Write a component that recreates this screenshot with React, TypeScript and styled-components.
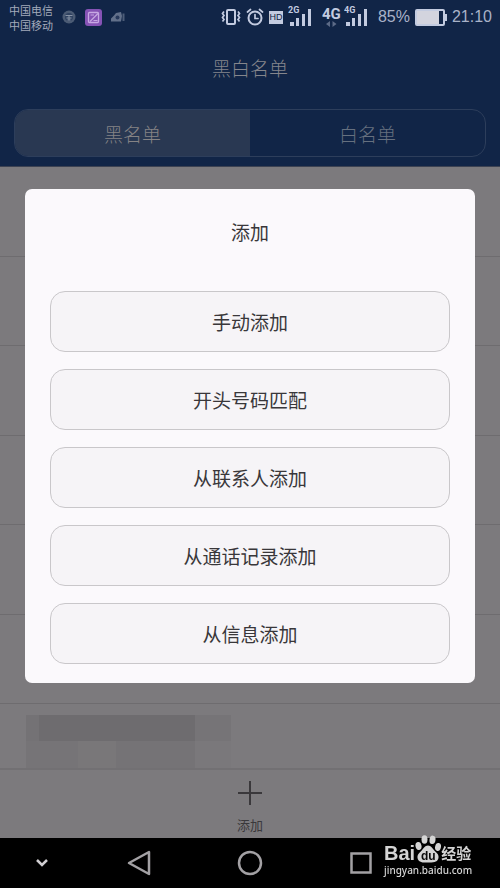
import React from "react";
import styled, { createGlobalStyle } from "styled-components";

const GlobalStyle = createGlobalStyle`
  * { box-sizing: border-box; }
  body {
    margin: 0;
    background: #7c7a7d;
    font-family: "Liberation Sans", "Noto Sans CJK SC", sans-serif;
  }
  button { font: inherit; color: inherit; margin: 0; padding: 0; border: 0; background: none; }
  svg { display: block; }
`;

const Screen = styled.div`
  display: flex;
  flex-direction: column;
  height: 100vh;
  overflow: hidden;
  background: #7c7a7d;
`;

const Header = styled.header`
  flex: none;
  background: #112547;
  border-bottom: 1px solid #3c4252;
`;

const StatusBar = styled.div`
  display: flex;
  align-items: center;
  justify-content: space-between;
  height: 34px;
  padding: 0 8px 0 9px;
  color: #c3cbe0;
`;

const StatusGroup = styled.div<{ $gap: number }>`
  display: flex;
  align-items: center;
  gap: ${(p) => p.$gap}px;
`;

const Carriers = styled.div`
  padding-top: 3px;
  font-size: 11px;
  line-height: 15px;
  color: #a3aabb;
`;

const StatusText = styled.span`
  font-family: "Liberation Sans", sans-serif;
  font-size: 16px;
  line-height: 20px;
  color: #a9b2c8;
`;

const Title = styled.h1`
  margin: 0;
  height: 75px;
  padding-top: 24px;
  font-size: 19px;
  line-height: 24px;
  font-weight: 300;
  text-align: center;
  color: #85868c;
`;

const Tabs = styled.div`
  display: grid;
  grid-template-columns: 1fr 1fr;
  height: 48px;
  margin: 0 14px 9px;
  border: 1px solid #2d3e5b;
  border-radius: 14px;
  overflow: hidden;
`;

const Tab = styled.button<{ $active?: boolean }>`
  background: ${(p) => (p.$active ? "#293852" : "transparent")};
  color: ${(p) => (p.$active ? "#858385" : "#66707f")};
  font-size: 19px;
  line-height: 24px;
  font-weight: 300;
  padding-top: 5px;
`;

const List = styled.ul`
  flex: 1;
  min-height: 0;
  margin: 0;
  padding: 0;
  list-style: none;
  overflow: hidden;
`;

const Row = styled.li`
  height: 90px;
  border-bottom: 1px solid #6e6c6f;
  &:nth-child(even) { height: 89px; }
`;

const Masked = styled.div`
  display: grid;
  grid-template-columns: 13px 39px 38px 79px 36px;
  grid-template-rows: 26px 29px;
  margin: 11px 0 0 26px;
`;

const Patch = styled.span<{ $tone: string }>`
  background: ${(p) => p.$tone};
`;

const BottomBar = styled.div`
  flex: none;
  display: flex;
  justify-content: center;
  height: 70px;
  border-top: 2px solid #727073;
`;

const AddButton = styled.button`
  display: flex;
  flex-direction: column;
  align-items: center;
  gap: 12px;
  width: 80px;
  padding-top: 11px;
  color: #3a383b;
  font-size: 13px;
  line-height: 18px;
`;

const NavBar = styled.nav`
  flex: none;
  display: grid;
  grid-template-columns: 83fr 111fr 111fr 111fr 84fr;
  height: 50px;
  background: #000;
  color: #a3a1a4;
`;

const NavButton = styled.button`
  display: grid;
  place-items: center;
`;

const Overlay = styled.div`
  position: fixed;
  inset: 34px 0 50px;
  display: flex;
  align-items: center;
  padding: 0 25px;
`;

const Dialog = styled.section`
  width: 100%;
  padding: 31px 25px 19px;
  border-radius: 7px;
  background: #fbf9fc;
`;

const DialogTitle = styled.h2`
  margin: 0 0 43px;
  font-size: 19px;
  line-height: 28px;
  font-weight: 400;
  text-align: center;
  color: #39373a;
`;

const Options = styled.div`
  display: grid;
  gap: 17px;
`;

const Option = styled.button`
  height: 61px;
  padding-top: 4px;
  border: 1px solid #c9c7ca;
  border-radius: 15px;
  background: #f6f4f7;
  color: #39373a;
  font-size: 19px;
  line-height: 28px;
`;

const Watermark = styled.a`
  position: fixed;
  right: 26px;
  bottom: 11px;
  width: 90px;
  color: #d4d4d4;
  text-decoration: none;
`;

const Brand = styled.span`
  display: flex;
  align-items: flex-end;
  height: 28px;
`;

const BrandText = styled.span`
  font-family: "Liberation Sans", sans-serif;
  font-weight: 700;
  font-size: 20px;
  line-height: 20px;
`;

const BrandSuffix = styled.span`
  font-family: "Noto Sans CJK SC", sans-serif;
  font-weight: 700;
  font-size: 15px;
  line-height: 20px;
`;

const Site = styled.span`
  display: block;
  font-family: "Noto Sans", sans-serif;
  font-size: 10px;
  font-weight: 500;
  line-height: 14px;
  white-space: nowrap;
`;

const RobotIcon = () => (
  <svg width="14" height="14" viewBox="0 0 14 14">
    <circle cx="7" cy="7" r="6.500" fill="#4b5b74" />
    <circle cx="7" cy="7" r="4" fill="#2f4261" />
    <path d="M3.500 5.500h7M4.500 8h5M5.500 10h3M7 5v5" stroke="#8792a5" fill="none" />
  </svg>
);

const GalleryIcon = () => (
  <svg width="17" height="17" viewBox="0 0 17 17">
    <rect width="17" height="17" rx="3" fill="#8653b5" />
    <rect x="3.500" y="3.500" width="10" height="10" rx="1" fill="none" stroke="#c7a8e3" strokeWidth="1.300" />
    <path d="M5 12.500l8-8M5.500 6h3.500M8.500 11.500h4" stroke="#c7a8e3" strokeWidth="1.200" />
  </svg>
);

const CameraIcon = () => (
  <svg width="14" height="10" viewBox="0 0 14 10">
    <path d="M0 9.500V6.500l3-3L5 1l5-1 1 4-1 5.500z" fill="#62708a" />
    <circle cx="6.500" cy="5.500" r="2" fill="#26385a" />
    <path d="M12.500 1.500v7.500" stroke="#4d5d78" strokeWidth="2" />
  </svg>
);

const VibrateIcon = () => (
  <svg width="20" height="18" viewBox="0 0 20 18" fill="none" stroke="currentColor">
    <rect x="6" y="2" width="8" height="14" rx="1" strokeWidth="2" />
    <path d="M3 3.500l-1.500 2L3 7.500l-1.500 2L3 11.500l-1.500 2M17 3.500l1.500 2-1.500 2 1.500 2-1.500 2 1.500 2" strokeWidth="1.700" />
  </svg>
);

const AlarmIcon = () => (
  <svg width="18" height="18" viewBox="0 0 18 18" fill="none" stroke="currentColor" strokeLinecap="round">
    <circle cx="9" cy="10" r="6.500" strokeWidth="2" />
    <path d="M9 6.500V10.500h3M1.500 4l3-2.500M16.500 4l-3-2.500" strokeWidth="1.700" />
  </svg>
);

const HdBadge = styled.span`
  width: 14px;
  height: 13px;
  background: #c3cbe0;
  color: #112547;
  font-family: "Liberation Sans", sans-serif;
  font-size: 9px;
  line-height: 13px;
  text-align: center;
`;

const Signal = ({ label }: { label: string }) => (
  <svg width="24" height="22" viewBox="0 0 24 22" fill="currentColor">
    <text x="0" y="7" fontSize="9" fontWeight="700" fontFamily="Roboto, sans-serif">{label}</text>
    <path d="M2 16h4v4H2zM8 12h3v8H8zM14 8h3v12h-3zM20 3h3v17h-3z" />
  </svg>
);

const NetworkIcon = () => (
  <svg width="20" height="26" viewBox="0 0 20 26" fill="currentColor">
    <text x="0" y="15" fontSize="15" fontWeight="700" fontFamily="Roboto, sans-serif">4G</text>
    <path d="M8 17v6l-4-3zM10.500 17v6l4-3z" fill="#5d6b87" />
  </svg>
);

const BatteryIcon = () => (
  <svg width="32" height="17" viewBox="0 0 32 17">
    <rect x="1" y="1" width="28" height="15" rx="1" fill="none" stroke="#c3cbe0" strokeWidth="2" />
    <path d="M2 2h22v13H2z" fill="#d3d4de" />
    <path d="M29 5h3v7h-3z" fill="#c3cbe0" />
  </svg>
);

const Paw = () => (
  <svg width="26" height="28" viewBox="0 0 26 28" fill="currentColor">
    <ellipse cx="3.500" cy="11" rx="3" ry="4" transform="rotate(-12 3.500 11)" />
    <ellipse cx="9.500" cy="4.500" rx="3" ry="4.200" />
    <ellipse cx="17.500" cy="4.800" rx="3" ry="4.200" transform="rotate(8 17.500 4.800)" />
    <ellipse cx="23" cy="12" rx="2.900" ry="4" transform="rotate(14 23 12)" />
    <path d="M13 10.500c3 0 4.500 3 6.500 5.200 2 2 4.500 3.500 4 7-.6 4-4 5-10.500 4.800-6 .3-10-.5-10.500-4.800-.3-3.500 2-5 4-7 2-2.200 3.500-5.200 6.500-5.200z" />
    <text x="6" y="25" fontSize="12" fontWeight="700" fontFamily="Liberation Sans, sans-serif" fill="#0a0a0a">du</text>
  </svg>
);

const tones = [
  "#747275", "#6e6c6f", "#6e6c6f", "#6e6c6f", "#767477",
  "#767477", "#767477", "#797779", "#757376", "#7a787b",
];

const options = ["手动添加", "开头号码匹配", "从联系人添加", "从通话记录添加", "从信息添加"];

export default function App() {
  return (
    <Screen>
      <GlobalStyle />
      <Header>
        <StatusBar>
          <StatusGroup $gap={9}>
            <Carriers>中国电信<br />中国移动</Carriers>
            <RobotIcon />
            <GalleryIcon />
            <CameraIcon />
          </StatusGroup>
          <StatusGroup $gap={10}>
            <StatusGroup $gap={5}>
              <VibrateIcon />
              <AlarmIcon />
              <HdBadge>HD</HdBadge>
              <Signal label="2G" />
            </StatusGroup>
            <StatusGroup $gap={2}>
              <NetworkIcon />
              <Signal label="4G" />
            </StatusGroup>
            <StatusGroup $gap={5}>
              <StatusText>85%</StatusText>
              <BatteryIcon />
              <StatusText>21:10</StatusText>
            </StatusGroup>
          </StatusGroup>
        </StatusBar>
        <Title>黑白名单</Title>
        <Tabs role="tablist">
          <Tab role="tab" aria-selected="true" $active>黑名单</Tab>
          <Tab role="tab" aria-selected="false">白名单</Tab>
        </Tabs>
      </Header>
      <List>
        {[0, 1, 2, 3, 4, 5].map((i) => <Row key={i} />)}
        <Row>
          <Masked>
            {tones.map((tone, i) => <Patch key={i} $tone={tone} />)}
          </Masked>
        </Row>
      </List>
      <BottomBar>
        <AddButton>
          <svg width="24" height="24" viewBox="0 0 24 24" stroke="currentColor" strokeWidth="2">
            <path d="M12 0v24M0 12h24" />
          </svg>
          添加
        </AddButton>
      </BottomBar>
      <NavBar>
        <NavButton aria-label="收起">
          <svg width="14" height="10" viewBox="0 0 14 10" fill="none" stroke="#d0ced1" strokeWidth="2.500">
            <path d="M2 2l5 5 5-5" />
          </svg>
        </NavButton>
        <NavButton aria-label="返回">
          <svg width="24" height="26" viewBox="0 0 24 26" fill="none" stroke="currentColor" strokeWidth="2.500" strokeLinejoin="round">
            <path d="M22 2v22L2 13z" />
          </svg>
        </NavButton>
        <NavButton aria-label="主页">
          <svg width="26" height="26" viewBox="0 0 26 26" fill="none" stroke="currentColor" strokeWidth="2.500">
            <circle cx="13" cy="13" r="11" />
          </svg>
        </NavButton>
        <NavButton aria-label="最近任务">
          <svg width="22" height="22" viewBox="0 0 22 22" fill="none" stroke="currentColor" strokeWidth="2.500">
            <rect x="1.500" y="1.500" width="19" height="19" />
          </svg>
        </NavButton>
      </NavBar>
      <Overlay>
        <Dialog role="dialog" aria-labelledby="dialog-title">
          <DialogTitle id="dialog-title">添加</DialogTitle>
          <Options>
            {options.map((label) => <Option key={label}>{label}</Option>)}
          </Options>
        </Dialog>
      </Overlay>
      <Watermark href="#">
        <Brand>
          <BrandText>Bai</BrandText>
          <Paw />
          <BrandSuffix>经验</BrandSuffix>
        </Brand>
        <Site>jingyan.baidu.com</Site>
      </Watermark>
    </Screen>
  );
}
